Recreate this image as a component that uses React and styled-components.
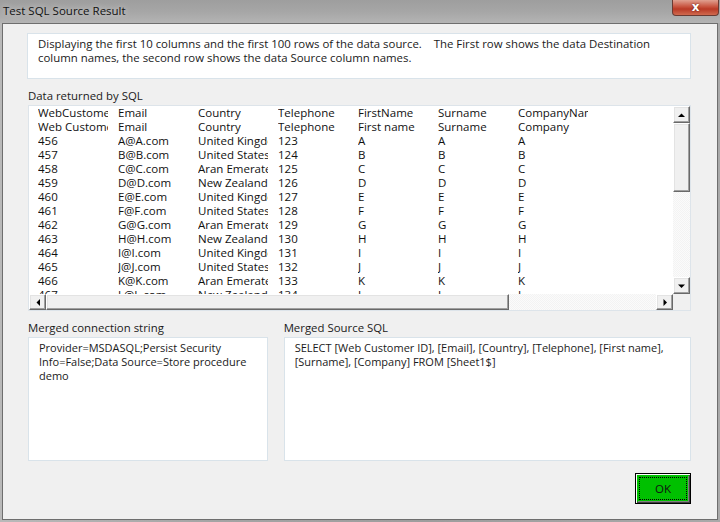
import React from "react";
import styled, { createGlobalStyle } from "styled-components";

const Global = createGlobalStyle`
  html, body { margin: 0; padding: 0; }
  body { width: 720px; height: 522px; overflow: hidden; font-family: "Open Sans", "Noto Sans", sans-serif; }
`;

const Frame = styled.div`
  width: 720px;
  height: 522px;
  box-sizing: border-box;
  display: flex;
  flex-direction: column;
  background: linear-gradient(90deg, #b9b9b9 0%, #a4a4a4 30%, #9d9d9d 60%, #a9a9a9 100%);
`;

const TitleBar = styled.div`
  height: 23px;
  flex: none;
  display: flex;
  align-items: flex-start;
  justify-content: space-between;
  background: linear-gradient(180deg, #9e9e9e 0%, #a6a6a6 50%, #b4b4b4 100%);
`;

const Title = styled.div`
  font-size: 11.5px;
  color: #111;
  padding: 4px 0 0 3px;
  line-height: 14px;
  text-shadow: 0 0 6px rgba(255,255,255,0.7);
`;

const CloseBtn = styled.div`
  width: 47px;
  height: 16px;
  margin-right: 1px;
  box-sizing: border-box;
  border: 1px solid #6a3a32;
  border-top: none;
  border-radius: 0 0 4px 4px;
  background: linear-gradient(180deg, #e0a090 0%, #c8533e 45%, #b93a26 60%, #d06a4f 100%);
  color: #fff;
  font-family: "DejaVu Sans", sans-serif;
  font-weight: bold;
  font-size: 12px;
  line-height: 14px;
  text-align: center;
  text-shadow: 0 0 2px #5a1a10;
`;

const Client = styled.div`
  flex: 1;
  margin: 0 2px 2px 2px;
  border: 1px solid #6e6e6e;
  background: #f0f0f0;
  padding: 9px 26px 0 24px;
  display: flex;
  flex-direction: column;
`;

const InfoBox = styled.div`
  height: 46px;
  box-sizing: border-box;
  background: #fff;
  border: 1px solid #d9e3ea;
  padding: 3px 10px;
  font-size: 11.4px;
  line-height: 14px;
  color: #1a1a1a;
`;

const Label = styled.div`
  font-size: 11.4px;
  line-height: 14px;
  color: #1a1a1a;
  margin: ${p => p.$top}px 0 2px ${p => p.$left ?? 1}px;
`;

const Grid = styled.div`
  margin-left: 1px;
  width: 663px;
  height: 206px;
  box-sizing: border-box;
  border: 1px solid #dde4ea;
  display: grid;
  grid-template-columns: 1fr 17px;
  grid-template-rows: 1fr 16px;
  background: #fff;
`;

const Cells = styled.div`
  overflow: hidden;
  padding: 0 0 0 9px;
  font-size: 11.5px;
  line-height: 14px;
  color: #111;
`;

const Row = styled.div`
  display: flex;
  height: 14px;
`;

const Cell = styled.div`
  width: 70px;
  flex: none;
  margin-right: 10px;
  white-space: nowrap;
  overflow: hidden;
`;

const VScroll = styled.div`
  display: flex;
  flex-direction: column;
  background: repeating-conic-gradient(#f3f3f3 0% 25%, #fbfbfb 0% 50%) 0 0 / 2px 2px;
`;

const HScroll = styled.div`
  display: flex;
  background: repeating-conic-gradient(#f3f3f3 0% 25%, #fbfbfb 0% 50%) 0 0 / 2px 2px;
`;

const Corner = styled.div`
  background: #f0f0f0;
`;

const SBtn = styled.div`
  width: ${p => p.$w}px;
  height: ${p => p.$h}px;
  flex: none;
  box-sizing: border-box;
  background: #f0f0f0;
  border-top: 1px solid #fff;
  border-left: 1px solid #fff;
  border-right: 1px solid #696969;
  border-bottom: 1px solid #696969;
  box-shadow: inset -1px -1px 0 #a0a0a0, inset 1px 1px 0 #e3e3e3;
  display: flex;
  align-items: center;
  justify-content: center;
`;

const Arrow = ({ dir }) => {
  const pts = {
    up: "0,4 7,4 3.5,0.5",
    down: "0,0.5 7,0.5 3.5,4",
    left: "4,0 4,7 0.5,3.5",
    right: "0.5,0 0.5,7 4,3.5",
  }[dir];
  const vert = dir === "up" || dir === "down";
  return (
    <svg width={vert ? 7 : 4} height={vert ? 4 : 7} viewBox={vert ? "0 0 7 4" : "0 0 4 7"}>
      <polygon points={pts} fill="#000" />
    </svg>
  );
};

const Spacer = styled.div`
  flex: 1;
`;

const Bottom = styled.div`
  display: flex;
  gap: 16px;
  margin-left: 1px;
`;

const Col = styled.div`
  display: flex;
  flex-direction: column;
  width: ${p => p.$w}px;
`;

const TextBox = styled.div`
  height: 124px;
  box-sizing: border-box;
  background: #fff;
  border: 1px solid #d9e3ea;
  padding: 3px 10px;
  font-size: 11px;
  line-height: 14px;
  color: #1a1a1a;
`;

const Footer = styled.div`
  display: flex;
  justify-content: flex-end;
  margin-top: 12px;
`;

const OkButton = styled.div`
  width: 56px;
  height: 31px;
  box-sizing: border-box;
  border: 1px solid #000;
  background: #00c000;
  box-shadow: inset 1px 1px 0 #fff, inset -1px -1px 0 #404040, inset 2px 2px 0 #00c000, inset -2px -2px 0 #808080;
  display: flex;
  align-items: center;
  justify-content: center;
  padding: 3px;
`;

const OkFocus = styled.div`
  width: 100%;
  height: 100%;
  box-sizing: border-box;
  border: 1px dotted #000;
  display: flex;
  align-items: center;
  justify-content: center;
  font-size: 11.5px;
  color: #111;
`;

const rows = [
  ["WebCustomerID", "Email", "Country", "Telephone", "FirstName", "Surname", "CompanyName"],
  ["Web Customer ID", "Email", "Country", "Telephone", "First name", "Surname", "Company"],
];
const countries = ["United Kingdom", "United States", "Aran Emerates", "New Zealand"];
"ABCDEFGHIJKL".split("").forEach((l, i) => {
  rows.push([String(456 + i), `${l}@${l}.com`, countries[i % 4], String(123 + i), l, l, l]);
});

export default function App() {
  return (
    <>
      <Global />
      <Frame>
        <TitleBar>
          <Title>Test SQL Source Result</Title>
          <CloseBtn>x</CloseBtn>
        </TitleBar>
        <Client>
          <InfoBox>
            Displaying the first 10 columns and the first 100 rows of the data source.&nbsp;&nbsp;&nbsp; The First row shows the data Destination column names, the second row shows the data Source column names.
          </InfoBox>
          <Label $top={10}>Data returned by SQL</Label>
          <Grid>
            <Cells>
              {rows.map((r, i) => (
                <Row key={i}>
                  {r.map((c, j) => (
                    <Cell key={j}>{c}</Cell>
                  ))}
                </Row>
              ))}
            </Cells>
            <VScroll>
              <SBtn $w={17} $h={17}><Arrow dir="up" /></SBtn>
              <SBtn $w={17} $h={69} />
              <Spacer />
              <SBtn $w={17} $h={17}><Arrow dir="down" /></SBtn>
            </VScroll>
            <HScroll>
              <SBtn $w={17} $h={16}><Arrow dir="left" /></SBtn>
              <SBtn $w={463} $h={16} />
              <Spacer />
              <SBtn $w={17} $h={16}><Arrow dir="right" /></SBtn>
            </HScroll>
            <Corner />
          </Grid>
          <Bottom>
            <Col $w={240}>
              <Label $top={10} $left={0}>Merged connection string</Label>
              <TextBox>Provider=MSDASQL;Persist Security Info=False;Data Source=Store procedure demo</TextBox>
            </Col>
            <Col $w={408}>
              <Label $top={10} $left={0}>Merged Source SQL</Label>
              <TextBox>SELECT [Web Customer ID], [Email], [Country], [Telephone], [First name], [Surname], [Company] FROM [Sheet1$]</TextBox>
            </Col>
          </Bottom>
          <Footer>
            <OkButton>
              <OkFocus>OK</OkFocus>
            </OkButton>
          </Footer>
        </Client>
      </Frame>
    </>
  );
}
